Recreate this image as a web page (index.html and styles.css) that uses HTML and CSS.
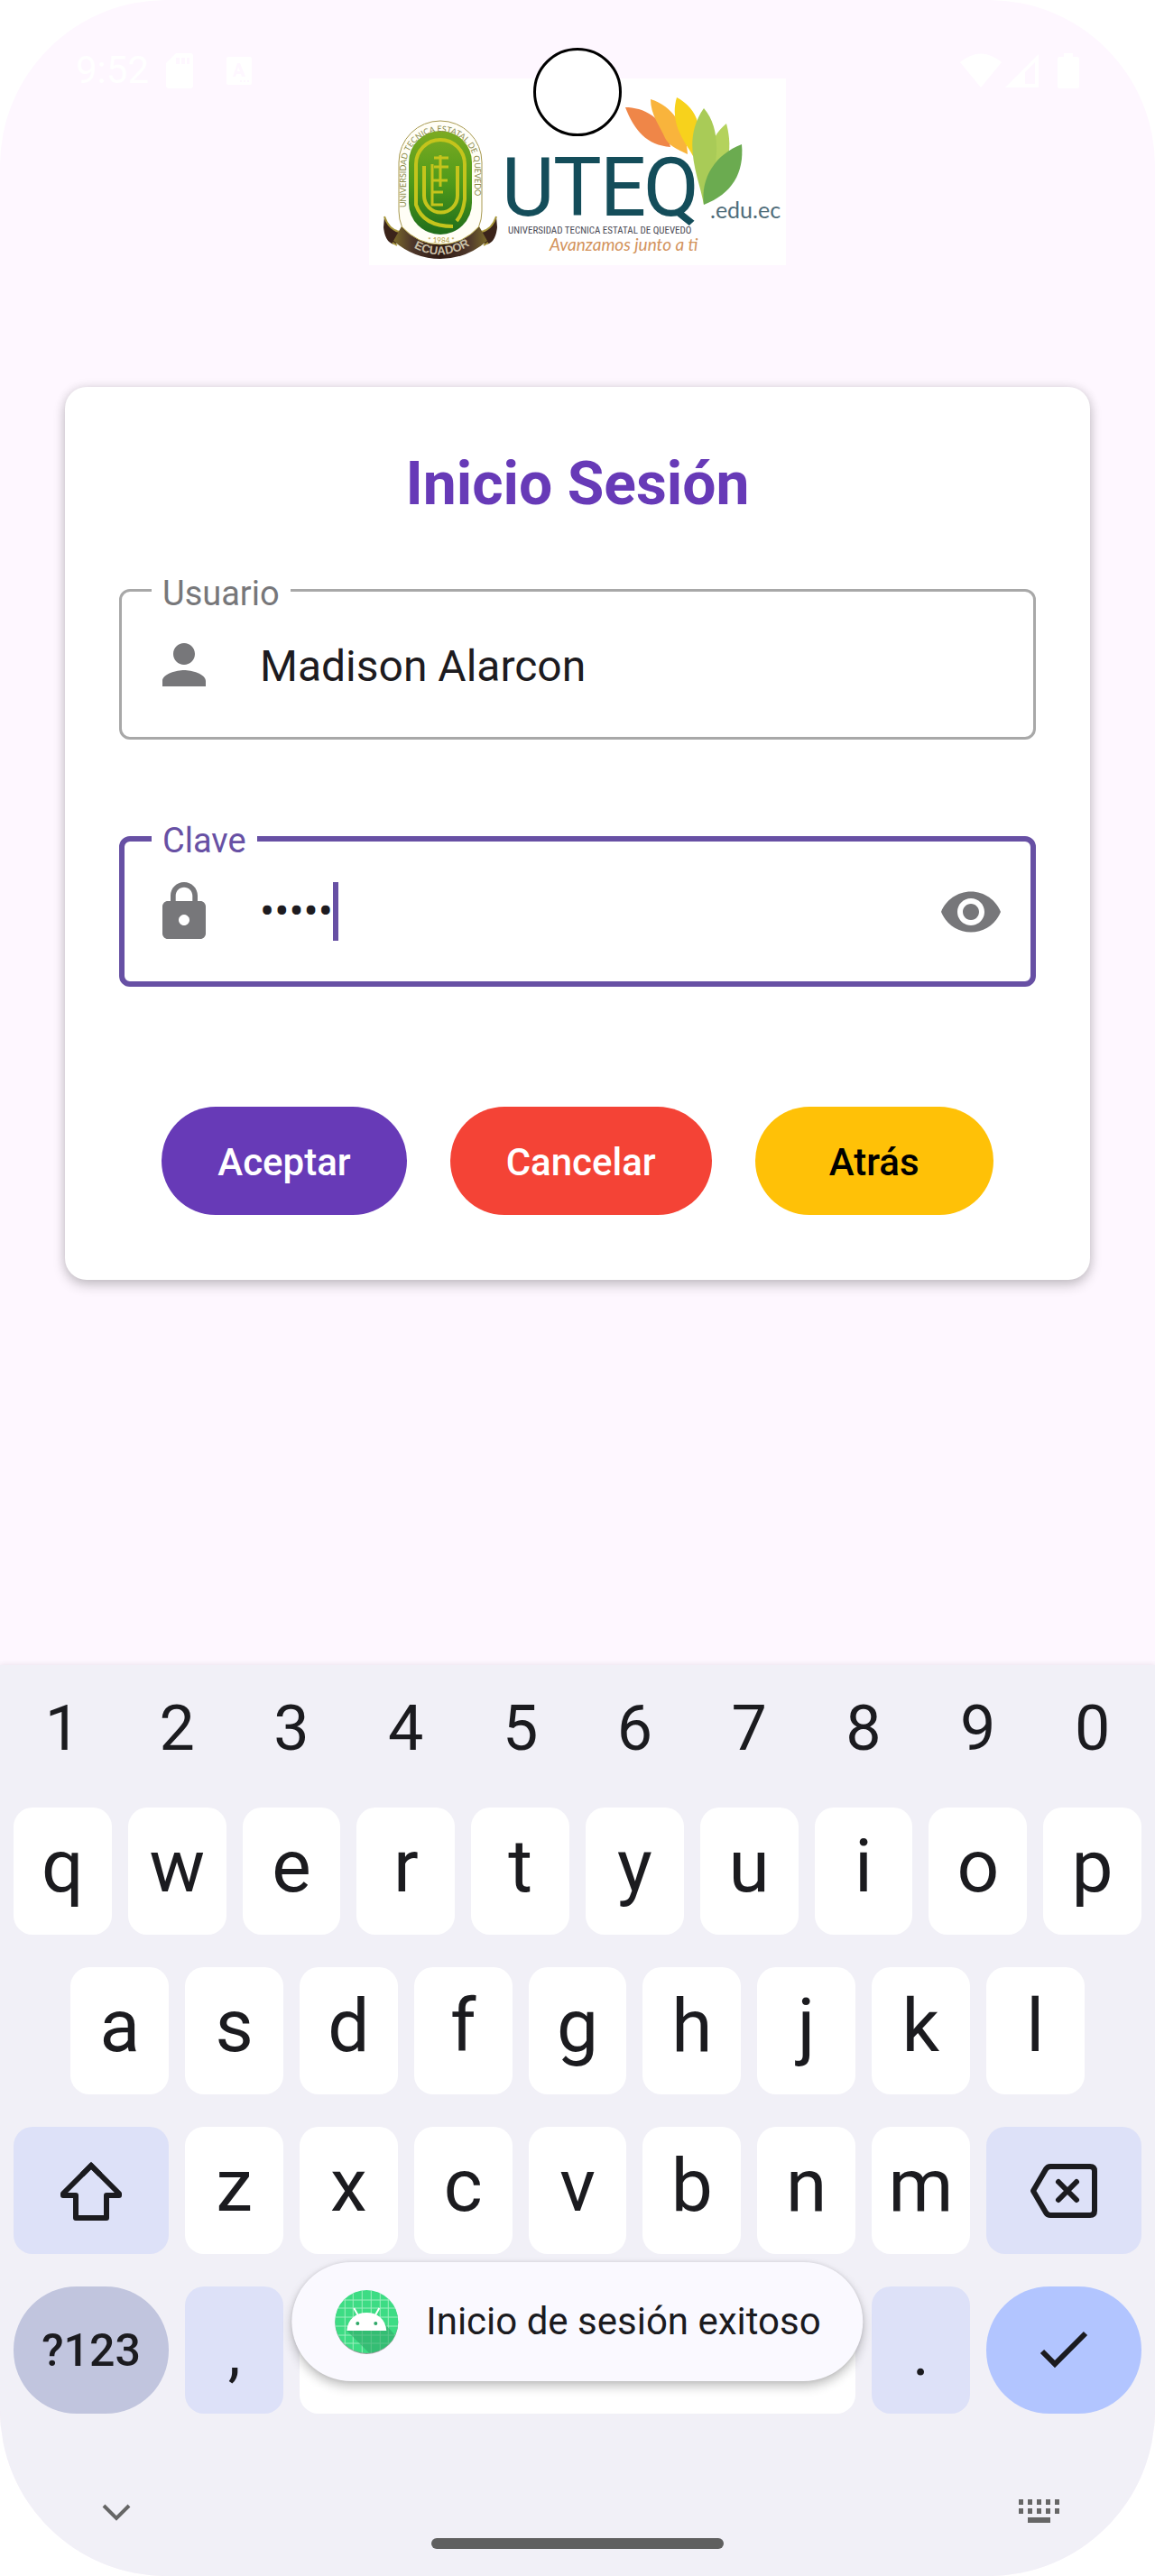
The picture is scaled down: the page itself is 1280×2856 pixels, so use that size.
FILE: index.html
```html
<!DOCTYPE html>
<html lang="es">
<head>
<meta charset="utf-8">
<meta name="viewport" content="width=device-width, initial-scale=1">
<title>Inicio Sesión</title>
<link rel="stylesheet" href="styles.css">
</head>
<body>
<div class="screen">

  <div class="status">
    <span class="status-time">9:52</span>
    <svg class="status-sd" width="30" height="39" viewBox="0 0 30 39" aria-hidden="true"><path fill-rule="evenodd" d="M11 0H27q3 0 3 3V36q0 3-3 3H3q-3 0-3-3V11ZM11 5v7h4V5ZM17 5v7h4V5ZM23 5v7h3V5Z"/></svg>
    <svg class="status-app" width="28" height="31" viewBox="0 0 28 31" aria-hidden="true"><path fill-rule="evenodd" d="M2 0H26q2 0 2 2V29q0 2-2 2H2q-2 0-2-2V2Q0 0 2 0ZM12 7L7 22h3l1-3h5l1 3h4L15 7ZM13 11l2 5h-3ZM15 26v2h2v-2ZM19 26v2h2v-2ZM23 26v2h2v-2Z"/></svg>
    <span class="status-gap"></span>
    <svg class="status-wifi" width="46" height="38" viewBox="0 0 46 38" aria-hidden="true"><path d="M0 10Q23-9 46 10L23 38Z"/></svg>
    <svg class="status-signal" width="37" height="37" viewBox="0 0 37 37" aria-hidden="true"><path fill-rule="evenodd" d="M37 0V37H0ZM33 9L22 20V33H33Z"/></svg>
    <svg width="24" height="39" viewBox="0 0 24 39" aria-hidden="true"><path d="M7 0H17V4H22q2 0 2 2V37q0 2-2 2H2q-2 0-2-2V6q0-2 2-2H7Z"/></svg>
  </div>
  <div class="camera"></div>

  <main class="content">
    <svg class="logo" viewBox="0 0 462 207" role="img" aria-label="UTEQ, Universidad Técnica Estatal de Quevedo">
      <defs>
        <linearGradient id="seal" x1="0" y1="0" x2="0" y2="1"><stop offset="0" stop-color="#7cab22"/><stop offset=".5" stop-color="#4f9a1a"/><stop offset="1" stop-color="#1f6d1c"/></linearGradient>
        <linearGradient id="ribbon" x1="0" y1="0" x2="1" y2="0"><stop offset="0" stop-color="#7a6a2a"/><stop offset=".2" stop-color="#4e372b"/><stop offset=".5" stop-color="#2e1a12"/><stop offset=".8" stop-color="#4e372b"/><stop offset="1" stop-color="#7a6a2a"/></linearGradient>
        <path id="sealArc" d="M41 143V97a38 38 0 0 1 76 0V143"/>
        <path id="ribbonArc" d="M39 181Q80 211 122 178"/>
      </defs>
      <rect width="462" height="207" fill="#fff"/>
      <rect x="33" y="47" width="92" height="146" rx="46" fill="#fffef6" stroke="#a89a52" stroke-width="1"/>
      <rect x="44" y="58" width="70" height="115" rx="35" fill="url(#seal)"/>
      <g fill="none" stroke="#c4c41c" stroke-width="4">
        <path d="M93 164Q60 164 52 140V95a27 27 0 0 1 54 0V134Q104 150 97 158"/>
        <path d="M61 97V130a18 18 0 0 0 37 0V97"/>
        <path d="M70 95V140H82M70 113H87M70 126H82M79 85V120M72 88H88M72 98H88" stroke-width="3"/>
      </g>
      <text class="seal-text"><textPath href="#sealArc">UNIVERSIDAD TECNICA ESTATAL DE QUEVEDO</textPath></text>
      <text class="seal-year" x="80" y="182">* 1984 *</text>
      <path fill="#3b241a" d="M17 153Q22 168 34 170L30 184Q18 184 16 165ZM141 153Q136 168 124 170L128 184Q140 184 142 165Z"/>
      <path fill="none" stroke="#a8973c" stroke-width="2" d="M17 153Q22 168 34 170M141 153Q136 168 124 170M26 182l5 3M132 182l-5 3"/>
      <path fill="url(#ribbon)" d="M36 164Q54 184 79 184Q104 184 122 164L131 180Q108 200 79 200Q50 200 27 180Z"/>
      <path fill="none" stroke="#b8a84a" stroke-width="1" d="M36 164Q54 184 79 184Q104 184 122 164"/>
      <text class="ribbon-text"><textPath href="#ribbonArc" startOffset="50%">ECUADOR</textPath></text>
      <path fill="#ef8648" d="M284 32C303 32 328 42 334 76C308 74 294 58 284 32Z"/>
      <path fill="#f9b43c" d="M312 23C336 30 352 54 353 84C340 78 332 74 328 66C322 52 312 40 312 23Z"/>
      <path fill="#f7d21c" d="M341 21C366 34 373 62 359 86C352 72 332 52 341 21Z"/>
      <path fill="#b4d25c" d="M396 50C404 80 398 105 373 136C366 100 376 66 396 50Z"/>
      <path fill="#a9cb57" d="M371 33C386 50 388 78 382 104C378 122 374 130 371 140C366 110 345 70 371 33Z"/>
      <path fill="#6bab50" d="M413 73C416 105 402 128 371 140C367 110 384 84 413 73Z"/>
      <text class="logo-name" y="152" x="147 204 256 304">UTEQ</text>
      <text class="logo-domain" x="378" y="155">.edu.ec</text>
      <text class="logo-full" x="154" y="172">UNIVERSIDAD TECNICA ESTATAL DE QUEVEDO</text>
      <text class="logo-motto" x="200" y="191">Avanzamos junto a ti</text>
    </svg>

    <form class="card">
      <h1 class="title">Inicio Sesión</h1>

      <div class="field">
        <label class="field-label" for="usuario">Usuario</label>
        <svg class="icon" viewBox="0 0 24 24" aria-hidden="true"><path d="M12 12c2.210 0 4-1.790 4-4s-1.790-4-4-4-4 1.790-4 4 1.790 4 4 4zm0 2c-2.670 0-8 1.340-8 4v2h16v-2c0-2.660-5.330-4-8-4z"/></svg>
        <input class="field-input" id="usuario" type="text" value="Madison Alarcon">
      </div>

      <div class="field field-active">
        <label class="field-label" for="clave">Clave</label>
        <svg class="icon" viewBox="0 0 24 24" aria-hidden="true"><path d="M18 8h-1V6c0-2.760-2.240-5-5-5S7 3.240 7 6v2H6c-1.100 0-2 .9-2 2v10c0 1.100.9 2 2 2h12c1.100 0 2-.9 2-2V10c0-1.100-.9-2-2-2zm-6 9c-1.100 0-2-.9-2-2s.9-2 2-2 2 .9 2 2-.9 2-2 2zm3.100-9H8.900V6c0-1.710 1.390-3.100 3.100-3.100s3.100 1.390 3.100 3.100v2z"/></svg>
        <input class="field-input field-password" id="clave" type="password" value="12345">
        <span class="caret"></span>
        <button class="reveal" type="button" aria-label="Mostrar clave"><svg class="icon" viewBox="0 0 24 24" aria-hidden="true"><path d="M12 4.500C7 4.500 2.730 7.610 1 12c1.730 4.390 6 7.500 11 7.500s9.270-3.110 11-7.500c-1.730-4.390-6-7.500-11-7.500zM12 17c-2.760 0-5-2.240-5-5s2.240-5 5-5 5 2.240 5 5-2.240 5-5 5zm0-8c-1.660 0-3 1.340-3 3s1.340 3 3 3 3-1.340 3-3-1.340-3-3-3z"/></svg></button>
      </div>

      <div class="actions">
        <button class="btn btn-accept" type="button">Aceptar</button>
        <button class="btn btn-cancel" type="button">Cancelar</button>
        <button class="btn btn-back" type="button">Atrás</button>
      </div>
    </form>
  </main>

  <section class="keyboard" aria-label="Teclado">
    <div class="row row-numbers">
      <button class="key">1</button><button class="key">2</button><button class="key">3</button><button class="key">4</button><button class="key">5</button><button class="key">6</button><button class="key">7</button><button class="key">8</button><button class="key">9</button><button class="key">0</button>
    </div>
    <div class="row">
      <button class="key">q</button><button class="key">w</button><button class="key">e</button><button class="key">r</button><button class="key">t</button><button class="key">y</button><button class="key">u</button><button class="key">i</button><button class="key">o</button><button class="key">p</button>
    </div>
    <div class="row">
      <button class="key key-indent">a</button><button class="key">s</button><button class="key">d</button><button class="key">f</button><button class="key">g</button><button class="key">h</button><button class="key">j</button><button class="key">k</button><button class="key">l</button>
    </div>
    <div class="row">
      <button class="key key-soft key-wide" aria-label="Mayúsculas"><svg width="72" height="72" viewBox="0 0 72 72" aria-hidden="true"><g fill="none" stroke="#1b1b1f" stroke-width="6"><path stroke-linejoin="round" d="M36 8L5 39V41H19V66H53V41H67V39Z"/><path d="M26 18L36 8L46 18"/></g></svg></button>
      <button class="key">z</button><button class="key">x</button><button class="key">c</button><button class="key">v</button><button class="key">b</button><button class="key">n</button><button class="key">m</button>
      <button class="key key-soft key-wide" aria-label="Borrar"><svg width="80" height="64" viewBox="0 0 80 64" aria-hidden="true"><g fill="none" stroke="#1b1b1f" stroke-width="6" stroke-linejoin="round" stroke-linecap="round"><path d="M6 32L20 8Q22 5 25 5H69Q74 5 74 10V54Q74 59 69 59H25Q22 59 20 56Z"/><path d="M34 22L54 42M54 22L34 42"/></g></svg></button>
    </div>
    <div class="row">
      <button class="key key-symbols key-wide">?123</button>
      <button class="key key-soft key-punct">,</button>
      <button class="key key-space" aria-label="Espacio"></button>
      <button class="key key-soft key-punct">.</button>
      <button class="key key-enter key-wide" aria-label="Aceptar"><svg width="58" height="46" viewBox="0 0 58 46" aria-hidden="true"><path fill="none" stroke="#1b1b1f" stroke-width="6" d="M5 24L19 38L53 4"/></svg></button>
    </div>
    <div class="nav">
      <button class="nav-btn" aria-label="Ocultar teclado"><svg width="50" height="36" viewBox="0 0 50 36" aria-hidden="true"><path fill="none" stroke="#666" stroke-width="4" d="M11 11L25 25L39 11"/></svg></button>
      <span class="home-pill"></span>
      <button class="nav-btn" aria-label="Cambiar teclado"><svg width="50" height="36" viewBox="0 0 50 36" aria-hidden="true"><path fill="#666" d="M3 4h5v6H3zM13 4h5v6h-5zM23 4h5v6h-5zM33 4h5v6h-5zM43 4h5v6h-5zM3 14h5v6H3zM13 14h5v6h-5zM23 14h5v6h-5zM33 14h5v6h-5zM43 14h5v6h-5zM13 24h25v6H13z"/></svg></button>
    </div>
  </section>

  <div class="toast" role="status">
    <svg width="72" height="72" viewBox="0 0 72 72" aria-hidden="true">
      <defs><clipPath id="disc"><circle cx="36" cy="36" r="35"/></clipPath></defs>
      <circle cx="36" cy="37" r="35" fill="#9a9a9a"/>
      <g clip-path="url(#disc)">
        <rect width="72" height="72" fill="#3ddc84"/>
        <path fill="none" stroke="#9deebf" stroke-width="1" d="M12 0V72M21 0V72M31 0V72M41 0V72M51 0V72M60 0V72M0 12H72M0 21H72M0 31H72M0 41H72M0 51H72M0 60H72"/>
        <path fill="#2fa868" opacity=".6" d="M14 46H58L56 38L72 56V72H40Z"/>
      </g>
      <path fill="#fff" d="M14 46C15 33 24 26 36 26S57 33 58 46Z"/>
      <path fill="none" stroke="#fff" stroke-width="2" d="M22 21L27 30M50 21L45 30"/>
      <circle cx="26" cy="38" r="2" fill="#2fa868"/><circle cx="46" cy="38" r="2" fill="#2fa868"/>
    </svg>
    <span>Inicio de sesión exitoso</span>
  </div>
</div>
</body>
</html>
```
FILE: styles.css
```css
*, *::before, *::after { box-sizing: border-box; }

body {
  margin: 0;
  background: #fff;
  font-family: Roboto, "Liberation Sans", sans-serif;
  color: #1d1b20;
}

button, input { font: inherit; color: inherit; border: 0; padding: 0; margin: 0; }
button { cursor: pointer; }
svg { display: block; flex: none; }

.screen {
  position: relative;
  display: flex;
  flex-direction: column;
  min-height: 100vh;
  overflow: hidden;
  border-radius: 184px;
  background: #fef7ff;
}

/* Status bar, drawn over the page content */
.status {
  position: absolute;
  inset: 0 0 auto;
  display: flex;
  align-items: center;
  padding: 54px 84px 0;
  color: #fff;
  fill: #fff;
}
.status-time { font-size: 42px; line-height: 48px; }
.status-sd { margin-left: 19px; }
.status-app { margin-left: 37px; }
.status-gap { flex: 1; }
.status-signal { margin: 0 21px 0 4px; }

.camera {
  position: absolute;
  top: 53px;
  left: 50%;
  width: 98px;
  height: 98px;
  margin-left: -49px;
  border: 3px solid #000;
  border-radius: 50%;
  background: #fff;
}

.content {
  display: flex;
  flex-direction: column;
  padding: 87px 72px 0;
}

/* Logo */
.logo { width: 462px; align-self: center; }
.logo-name { font: 90px Roboto, sans-serif; fill: #144d5a; }
.logo-domain { font: 25px Lato, sans-serif; fill: #4f6d7a; }
.logo-full { font: 11px "Liberation Sans Narrow", "Roboto Condensed", Roboto, sans-serif; fill: #4a4a55; }
.logo-motto { font: italic 19px Lato, sans-serif; fill: #d3935c; }
.seal-text { font: 9px Lato, sans-serif; fill: #8a8a4a; }
.seal-year { font: 8px Lato, sans-serif; fill: #b09a3a; text-anchor: middle; }
.ribbon-text { font: bold 13px "Liberation Sans", sans-serif; fill: #c9bfa6; text-anchor: middle; }

/* Login card */
.card {
  margin-top: 135px;
  padding: 69px 60px 72px;
  border-radius: 24px;
  background: #fff;
  box-shadow: 0 6px 14px rgba(0, 0, 0, .2), 0 0 12px rgba(0, 0, 0, .1);
}
.title {
  margin: 0 0 77px;
  font-size: 66px;
  line-height: 78px;
  font-weight: 700;
  text-align: center;
  color: #673ab7;
}

.field {
  position: relative;
  display: flex;
  align-items: center;
  height: 167px;
  padding: 0 33px;
  border: 3px solid #a8a8a8;
  border-radius: 12px;
}
.field + .field { margin-top: 107px; }
.field-active { padding: 0 30px; border: 6px solid #6750a4; }
.field-label {
  position: absolute;
  top: -20px;
  left: 33px;
  padding: 0 12px;
  background: #fff;
  font-size: 38px;
  line-height: 44px;
  color: #77777a;
}
.field-active .field-label { top: -23px; left: 30px; color: #6750a4; }
.icon { width: 72px; height: 72px; fill: #77777a; }
.field-input {
  flex: 1;
  min-width: 0;
  margin-left: 48px;
  padding-top: 4px;
  font-size: 48px;
  line-height: 60px;
  background: none;
  outline: 0;
}
.field-password { flex: none; padding: 0; field-sizing: content; }
.caret { width: 6px; height: 65px; background: #6750a4; }
.reveal { margin-left: auto; background: none; }

.actions {
  display: flex;
  justify-content: center;
  gap: 48px;
  margin-top: 133px;
}
.btn {
  min-width: 264px;
  height: 120px;
  padding: 2px 62px 0;
  border-radius: 60px;
  font-size: 42px;
  font-weight: 500;
  color: #fff;
}
.btn-accept { background: #673ab7; }
.btn-cancel { background: #f44336; }
.btn-back { background: #ffc107; color: #000; }

/* Keyboard */
.keyboard {
  display: flex;
  flex-direction: column;
  gap: 36px;
  margin-top: auto;
  padding: 18px 15px 30px;
  background: #f1f0f7;
  box-shadow: 0 0 6px rgba(60, 40, 60, .12);
  color: #1b1b1f;
}
.row {
  display: grid;
  grid-template-columns: repeat(20, 1fr);
  gap: 18px;
}
.key {
  grid-column: span 2;
  display: flex;
  align-items: center;
  justify-content: center;
  height: 141px;
  padding-bottom: 12px;
  border-radius: 21px;
  background: #fff;
  font-size: 82px;
}
.row-numbers .key { height: 104px; padding: 0; background: none; font-size: 70px; }
.key-indent { grid-column: 2 / span 2; }
.key-wide { grid-column: span 3; padding: 0; }
.key-soft { background: #dde1f8; }
.key-punct { padding: 6px 0 0; font-size: 70px; }
.key-space { grid-column: span 10; }
.key-symbols { border-radius: 70px; background: #c1c5de; font-size: 50px; font-weight: 500; }
.key-enter { border-radius: 70px; background: #b2c5ff; }

.nav {
  display: flex;
  justify-content: space-between;
  align-items: flex-end;
  height: 59px;
  margin-top: 55px;
  padding: 0 89px;
}
.nav-btn { align-self: flex-start; background: none; }
.home-pill { width: 324px; height: 12px; border-radius: 6px; background: #5f5f5f; }

/* Toast floats over the keyboard */
.toast {
  position: absolute;
  bottom: 216px;
  left: 50%;
  transform: translateX(-50%);
  display: flex;
  align-items: center;
  gap: 30px;
  padding: 30px 47px;
  border-radius: 66px;
  background: #faf9ff;
  box-shadow: 0 6px 12px rgba(0, 0, 0, .24), 0 0 4px rgba(0, 0, 0, .1);
  font-size: 42px;
  line-height: 48px;
  white-space: nowrap;
  color: #1b1b1f;
}
```
